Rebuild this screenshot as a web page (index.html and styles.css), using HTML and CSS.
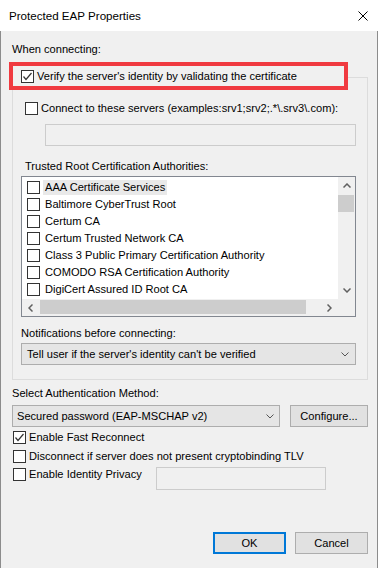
FILE: index.html
```html
<!DOCTYPE html>
<html lang="en">
<head>
    <meta charset="UTF-8">
    <title>Protected EAP Properties</title>
    <link rel="stylesheet" href="styles.css">
</head>
<body>
    <div class="window">
        <div class="titlebar">
            <span class="title">Protected EAP Properties</span>
            <svg class="close" width="10" height="10" viewBox="0 0 10 10"><path d="M0.5 0.5L9.5 9.5M9.5 0.5L0.5 9.5" stroke="#000" stroke-width="1"/></svg>
        </div>
        <div class="dialog">
            <p class="label first">When connecting:</p>
            <div class="verify">
                <label class="check"><span class="cb"><svg width="11" height="11" viewBox="0 0 11 11"><path d="M1.5 5.5L4 8.5L9.5 2" fill="none" stroke="#333" stroke-width="1.2"/></svg></span>Verify the server's identity by validating the certificate</label>
            </div>
            <div class="group">
                <label class="check"><span class="cb"></span>Connect to these servers (examples:srv1;srv2;.*\.srv3\.com):</label>
                <div class="textbox servers"></div>
                <p class="label trusted">Trusted Root Certification Authorities:</p>
                <div class="listbox">
                    <ul class="items">
                        <li><span class="cb"></span><span class="name focus">AAA Certificate Services</span></li>
                        <li><span class="cb"></span><span class="name">Baltimore CyberTrust Root</span></li>
                        <li><span class="cb"></span><span class="name">Certum CA</span></li>
                        <li><span class="cb"></span><span class="name">Certum Trusted Network CA</span></li>
                        <li><span class="cb"></span><span class="name">Class 3 Public Primary Certification Authority</span></li>
                        <li><span class="cb"></span><span class="name">COMODO RSA Certification Authority</span></li>
                        <li><span class="cb"></span><span class="name">DigiCert Assured ID Root CA</span></li>
                    </ul>
                    <div class="vbar">
                        <span class="arrow"><svg width="8" height="5" viewBox="0 0 8 5"><path d="M0.5 4.5L4 1L7.5 4.5" fill="none" stroke="#606060" stroke-width="1.5"/></svg></span>
                        <span class="thumb"></span>
                        <span class="track"></span>
                        <span class="arrow"><svg width="8" height="5" viewBox="0 0 8 5"><path d="M0.5 0.5L4 4L7.5 0.5" fill="none" stroke="#606060" stroke-width="1.5"/></svg></span>
                    </div>
                    <div class="hbar">
                        <span class="arrow"><svg width="5" height="8" viewBox="0 0 5 8"><path d="M4.5 0.5L1 4L4.5 7.5" fill="none" stroke="#606060" stroke-width="1.5"/></svg></span>
                        <span class="thumb"></span>
                        <span class="track"></span>
                        <span class="arrow"><svg width="5" height="8" viewBox="0 0 5 8"><path d="M0.5 0.5L4 4L0.5 7.5" fill="none" stroke="#606060" stroke-width="1.5"/></svg></span>
                    </div>
                    <div class="corner"></div>
                </div>
                <p class="label notify">Notifications before connecting:</p>
                <div class="combo wide">
                    <span>Tell user if the server's identity can't be verified</span>
                    <svg width="8" height="5" viewBox="0 0 8 5"><path d="M0.5 0.5L4 4L7.5 0.5" fill="none" stroke="#555" stroke-width="1"/></svg>
                </div>
            </div>
            <p class="label method">Select Authentication Method:</p>
            <div class="method-row">
                <div class="combo">
                    <span>Secured password (EAP-MSCHAP v2)</span>
                    <svg width="8" height="5" viewBox="0 0 8 5"><path d="M0.5 0.5L4 4L7.5 0.5" fill="none" stroke="#555" stroke-width="1"/></svg>
                </div>
                <button class="btn configure">Configure...</button>
            </div>
            <label class="check option fast"><span class="cb"><svg width="11" height="11" viewBox="0 0 11 11"><path d="M1.5 5.5L4 8.5L9.5 2" fill="none" stroke="#333" stroke-width="1.2"/></svg></span>Enable Fast Reconnect</label>
            <label class="check option"><span class="cb"></span>Disconnect if server does not present cryptobinding TLV</label>
            <div class="privacy-row">
                <label class="check privacy"><span class="cb"></span>Enable Identity Privacy</label>
                <div class="textbox identity"></div>
            </div>
            <div class="actions">
                <button class="btn ok">OK</button>
                <button class="btn">Cancel</button>
            </div>
        </div>
    </div>
</body>
</html>
```

FILE: styles.css
```css
* {
    margin: 0;
    padding: 0;
    box-sizing: border-box;
}

body {
    font-family: 'Liberation Sans', Arial, sans-serif;
    font-size: 11.1px;
    color: #000;
    background: #fff;
}

.window {
    width: 378px;
}

.titlebar {
    height: 31px;
    display: flex;
    align-items: center;
    justify-content: space-between;
    padding: 0 10px 0 9px;
    background: #fff;
}

.title {
    font-size: 11.6px;
}

.dialog {
    height: 537px;
    background: #f0f0f0;
    border-left: 1px solid #8c8c8c;
    border-right: 1px solid #8c8c8c;
    padding: 10px 9px 0 11px;
}

.label {
    line-height: 16px;
}

/* checkbox rows */
.check {
    display: flex;
    align-items: center;
    line-height: 16px;
    gap: 3px;
    white-space: nowrap;
}

.cb {
    width: 13px;
    height: 13px;
    flex: none;
    border: 1px solid #333;
    background: #fff;
    display: flex;
    align-items: center;
    justify-content: center;
}

.verify {
    position: relative;
    z-index: 1;
    margin: 5px 0 0 -3px;
    width: 339px;
    height: 28px;
    border: 4px solid #f03a40;
    background: #f0f0f0;
    display: flex;
    align-items: center;
    padding-left: 8px;
}

.group {
    margin-top: -13px;
    width: 356px;
    border: 1px solid #dcdcdc;
    padding: 22px 0 14px 12px;
}

.textbox {
    height: 22px;
    border: 1px solid #cccccc;
    background: #f0f0f0;
}

.servers {
    margin: 8px 0 0 20px;
    width: 311px;
}

.trusted {
    margin-top: 12px;
}

/* certificate list */
.listbox {
    margin: 2px 0 0 -4px;
    width: 335px;
    height: 141px;
    border: 1px solid #828790;
    background: #fff;
    display: grid;
    grid-template-columns: 1fr 17px;
    grid-template-rows: 1fr 17px;
    overflow: hidden;
}

.items {
    list-style: none;
    padding: 2px 0 0 5px;
    overflow: hidden;
}

.items li {
    height: 17px;
    display: flex;
    align-items: center;
    gap: 3px;
    white-space: nowrap;
}

.items .name {
    padding: 0 2px;
    line-height: 15px;
}

.items .name.focus {
    background: #e9e9e9;
}

.vbar {
    background: #f0f0f0;
    display: flex;
    flex-direction: column;
}

.hbar {
    background: #f0f0f0;
    display: flex;
}

.arrow {
    width: 17px;
    height: 17px;
    flex: none;
    display: flex;
    align-items: center;
    justify-content: center;
}

.track {
    flex: 1;
}

.vbar .thumb {
    height: 17px;
    margin: 1px 1px 0 0;
    background: #cdcdcd;
}

.hbar .thumb {
    width: 266px;
    margin: 1px 0 2px 1px;
    background: #cdcdcd;
}

.corner {
    background: #f0f0f0;
}

.notify {
    margin: 8px 0 0 -4px;
}

/* combo boxes and buttons */
.combo {
    height: 22px;
    border: 1px solid #adadad;
    background: #e5e5e5;
    display: flex;
    align-items: center;
    justify-content: space-between;
    padding: 0 6px 0 5px;
    white-space: nowrap;
}

.combo.wide {
    margin: 2px 0 0 -4px;
    width: 335px;
}

.method {
    margin-top: 5px;
}

.method-row {
    margin-top: 4px;
    display: flex;
    gap: 10px;
}

.method-row .combo {
    width: 268px;
    padding-left: 4px;
    padding-right: 5px;
}

.btn {
    font-family: inherit;
    font-size: 11.1px;
    color: #000;
    height: 22px;
    border: 1px solid #adadad;
    background: #e1e1e1;
}

.configure {
    width: 78px;
}

.option {
    margin-left: 1px;
}

.fast {
    margin-top: 2px;
}

.fast + .option {
    margin-top: 3px;
}

.privacy-row {
    margin-top: 2px;
    display: flex;
}

.privacy {
    margin-left: 1px;
    width: 143px;
    align-self: flex-start;
}

.identity {
    margin-top: 1px;
    width: 170px;
    height: 23px;
}

.actions {
    margin-top: 42px;
    display: flex;
    justify-content: flex-end;
    gap: 9px;
}

.actions .btn {
    width: 73px;
}

.btn.ok {
    border: 2px solid #0078d7;
}
```
